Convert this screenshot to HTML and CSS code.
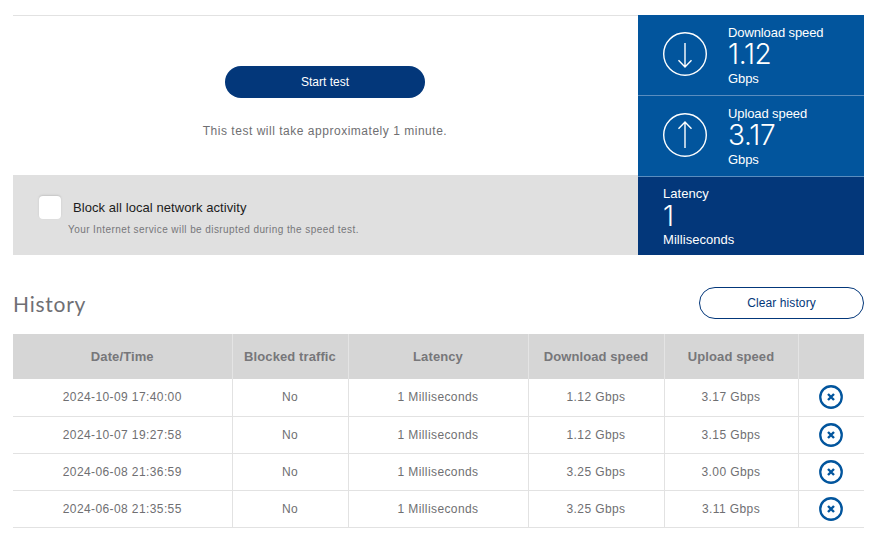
FILE: index.html
```html
<!DOCTYPE html>
<html lang="en">
<head>
<meta charset="utf-8">
<title>Speed test</title>
<link rel="stylesheet" href="styles.css">
</head>
<body>
<main class="page">
  <section class="top">
    <div class="left">
      <div class="start">
        <button class="btn-start">Start test</button>
        <p class="note">This test will take approximately 1 minute.</p>
      </div>
      <div class="block">
        <span class="check"></span>
        <div class="block-text">
          <div class="block-title">Block all local network activity</div>
          <div class="block-sub">Your Internet service will be disrupted during the speed test.</div>
        </div>
      </div>
    </div>
    <div class="right">
      <div class="stat">
        <svg class="dial" viewBox="0 0 46 46" width="46" height="46"><circle cx="23" cy="23" r="21.3"/><path d="M23 12V36M16.5 29.3L23 36L29.5 29.3"/></svg>
        <div class="stat-text">
          <div class="label">Download speed</div>
          <div class="value">1.12</div>
          <div class="label unit">Gbps</div>
        </div>
      </div>
      <div class="stat second">
        <svg class="dial" viewBox="0 0 46 46" width="46" height="46"><circle cx="23" cy="23" r="21.3"/><path d="M23 36V10M16.5 16.7L23 10L29.5 16.7"/></svg>
        <div class="stat-text">
          <div class="label">Upload speed</div>
          <div class="value">3.17</div>
          <div class="label unit">Gbps</div>
        </div>
      </div>
      <div class="latency">
        <div class="label">Latency</div>
        <div class="value">1</div>
        <div class="label unit">Milliseconds</div>
      </div>
    </div>
  </section>
  <section class="history-head">
    <h2>History</h2>
    <button class="btn-clear">Clear history</button>
  </section>
  <table class="history">
    <colgroup>
      <col class="c1"><col class="c2"><col class="c3"><col class="c4"><col class="c5"><col class="c6">
    </colgroup>
    <thead>
      <tr><th>Date/Time</th><th>Blocked traffic</th><th>Latency</th><th>Download speed</th><th>Upload speed</th><th></th></tr>
    </thead>
    <tbody>
      <tr><td>2024-10-09 17:40:00</td><td>No</td><td>1 Milliseconds</td><td>1.12 Gbps</td><td>3.17 Gbps</td><td><svg class="del" viewBox="0 0 24 24" width="24" height="24"><circle cx="12" cy="12" r="10.75"/><path d="M9 9L15 15M15 9L9 15"/></svg></td></tr>
      <tr><td>2024-10-07 19:27:58</td><td>No</td><td>1 Milliseconds</td><td>1.12 Gbps</td><td>3.15 Gbps</td><td><svg class="del" viewBox="0 0 24 24" width="24" height="24"><circle cx="12" cy="12" r="10.75"/><path d="M9 9L15 15M15 9L9 15"/></svg></td></tr>
      <tr><td>2024-06-08 21:36:59</td><td>No</td><td>1 Milliseconds</td><td>3.25 Gbps</td><td>3.00 Gbps</td><td><svg class="del" viewBox="0 0 24 24" width="24" height="24"><circle cx="12" cy="12" r="10.75"/><path d="M9 9L15 15M15 9L9 15"/></svg></td></tr>
      <tr><td>2024-06-08 21:35:55</td><td>No</td><td>1 Milliseconds</td><td>3.25 Gbps</td><td>3.11 Gbps</td><td><svg class="del" viewBox="0 0 24 24" width="24" height="24"><circle cx="12" cy="12" r="10.75"/><path d="M9 9L15 15M15 9L9 15"/></svg></td></tr>
    </tbody>
  </table>
</main>
</body>
</html>
```
FILE: styles.css
```css
* { box-sizing: border-box; }
html, body { margin: 0; padding: 0; background: #fff; }
body { font-family: "Liberation Sans", Arial, sans-serif; color: #6f6f72; overflow: hidden; }
.page { width: 851px; margin: 15px 0 0 13px; }
.top { display: flex; height: 240px; border-top: 1px solid #e2e2e2; }
.left { width: 625px; display: flex; flex-direction: column; }
.start { height: 159px; display: flex; flex-direction: column; align-items: center; padding: 50px 1px 0 0; }
.btn-start { width: 200px; height: 32px; border: 0; border-radius: 16px; background: #03377a; color: #fff; font: 12px "Liberation Sans", Arial, sans-serif; padding: 0; }
.note { margin: 25px 0 0; font-size: 12px; line-height: 16px; letter-spacing: 0.52px; }
.block { height: 80px; background: #e0e0e0; display: flex; padding: 21px 0 0 26px; }
.check { width: 22px; height: 23px; border-radius: 4px; background: #fff; box-shadow: 0 -1px 2px #c4c4c4; }
.block-text { margin-left: 7px; padding-top: 4px; }
.block-title { margin-left: 5px; font-size: 13px; line-height: 16px; letter-spacing: 0.07px; color: #1c1c20; }
.block-sub { margin-top: 8px; font-size: 10px; line-height: 12px; letter-spacing: 0.42px; color: #77777a; }
.right { width: 226px; margin-top: -1px; display: flex; flex-direction: column; color: #fff; }
.stat { height: 80px; background: #02559d; display: flex; padding: 10px 0 0 24px; }
.stat.second { height: 81px; border-top: 1px solid #5a8dbf; }
.dial { margin-top: 6px; flex: none; fill: none; stroke: #fff; stroke-width: 1.4; }
.stat-text { margin-left: 20px; letter-spacing: -0.1px; }
.label { font-size: 13px; line-height: 15px; }
.value { font-family: Inter, sans-serif; font-weight: 300; font-size: 28px; line-height: 28px; letter-spacing: -0.3px; }
.unit { margin-top: 3px; }
.latency { flex: 1; background: #03377a; padding: 9px 0 0 25px; border-top: 1px solid #5a8dbf; }
.latency .label { letter-spacing: 0.05px; }
.latency .value { margin-top: 1px; }
.latency .unit { margin-top: 2px; }
.history-head { display: flex; justify-content: space-between; align-items: center; height: 32px; margin-top: 32px; }
h2 { margin: 0; font-family: Lato, sans-serif; font-weight: 400; font-size: 21px; letter-spacing: 0.75px; color: #6f6f74; }
.btn-clear { width: 165px; height: 32px; background: #fff; border: 1px solid #03377a; border-radius: 16px; color: #03377a; font: 12px "Liberation Sans", Arial, sans-serif; letter-spacing: 0.1px; padding: 0; }
.history { width: 851px; table-layout: fixed; border-collapse: collapse; margin-top: 15px; font-size: 12px; }
.c1 { width: 219px; } .c2 { width: 116px; } .c3 { width: 180px; } .c4 { width: 136px; } .c5 { width: 134px; } .c6 { width: 66px; }
th { height: 45px; background: #d6d6d6; color: #77777a; font-size: 13px; font-weight: 700; letter-spacing: 0.1px; text-align: center; padding: 0; border-left: 1px solid #e4e4e4; }
th:first-child, td:first-child { border-left: 0; }
td { height: 37px; text-align: center; padding: 0; border-left: 1px solid #e2e2e2; border-bottom: 1px solid #e2e2e2; letter-spacing: 0.4px; }
.del { display: block; margin: 0 auto; fill: none; stroke: #02559d; stroke-width: 2.3; }
.del path { stroke-width: 2.4; }
```
